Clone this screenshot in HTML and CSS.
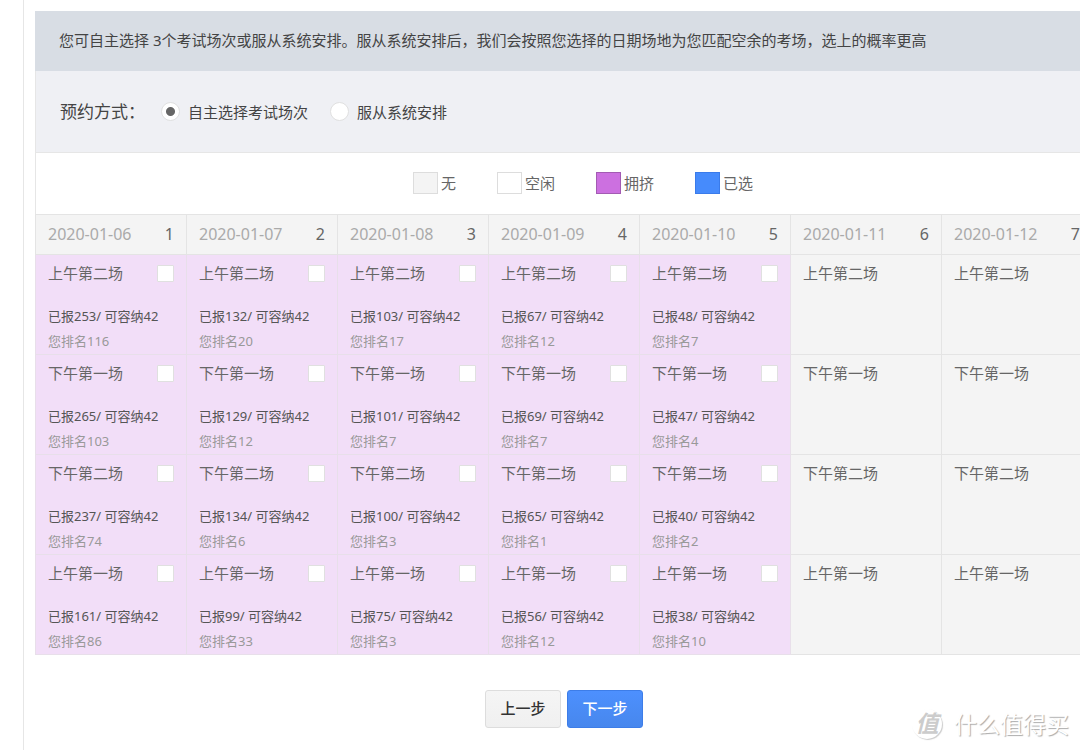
FILE: index.html
```html
<!DOCTYPE html>
<html lang="zh-CN">
<head>
<meta charset="utf-8">
<title>考试预约</title>
<link rel="stylesheet" href="styles.css">
</head>
<body>
<main class="page">
  <form class="panel">
    <p class="notice">您可自主选择 3个考试场次或服从系统安排。服从系统安排后，我们会按照您选择的日期场地为您匹配空余的考场，选上的概率更高</p>
    <div class="mode" role="radiogroup" aria-labelledby="mode-title">
      <span class="mode-title" id="mode-title">预约方式：</span>
      <label class="option"><input class="radio" type="radio" name="mode" checked>自主选择考试场次</label>
      <label class="option"><input class="radio" type="radio" name="mode">服从系统安排</label>
    </div>
    <div class="legend">
      <span class="legend-item"><i class="swatch none"></i>无</span>
      <span class="legend-item"><i class="swatch free"></i>空闲</span>
      <span class="legend-item"><i class="swatch busy"></i>拥挤</span>
      <span class="legend-item"><i class="swatch chosen"></i>已选</span>
    </div>
    <table class="schedule">
      <thead>
        <tr>
          <th><div class="day"><span>2020-01-06</span><b>1</b></div></th>
          <th><div class="day"><span>2020-01-07</span><b>2</b></div></th>
          <th><div class="day"><span>2020-01-08</span><b>3</b></div></th>
          <th><div class="day"><span>2020-01-09</span><b>4</b></div></th>
          <th><div class="day"><span>2020-01-10</span><b>5</b></div></th>
          <th><div class="day"><span>2020-01-11</span><b>6</b></div></th>
          <th><div class="day"><span>2020-01-12</span><b>7</b></div></th>
        </tr>
      </thead>
      <tbody>
        <tr>
          <td class="crowded"><label class="slot">上午第二场<input class="check" type="checkbox"></label><p class="count">已报253/ 可容纳42</p><p class="rank">您排名116</p></td>
          <td class="crowded"><label class="slot">上午第二场<input class="check" type="checkbox"></label><p class="count">已报132/ 可容纳42</p><p class="rank">您排名20</p></td>
          <td class="crowded"><label class="slot">上午第二场<input class="check" type="checkbox"></label><p class="count">已报103/ 可容纳42</p><p class="rank">您排名17</p></td>
          <td class="crowded"><label class="slot">上午第二场<input class="check" type="checkbox"></label><p class="count">已报67/ 可容纳42</p><p class="rank">您排名12</p></td>
          <td class="crowded"><label class="slot">上午第二场<input class="check" type="checkbox"></label><p class="count">已报48/ 可容纳42</p><p class="rank">您排名7</p></td>
          <td><span class="slot">上午第二场</span></td>
          <td><span class="slot">上午第二场</span></td>
        </tr>
        <tr>
          <td class="crowded"><label class="slot">下午第一场<input class="check" type="checkbox"></label><p class="count">已报265/ 可容纳42</p><p class="rank">您排名103</p></td>
          <td class="crowded"><label class="slot">下午第一场<input class="check" type="checkbox"></label><p class="count">已报129/ 可容纳42</p><p class="rank">您排名12</p></td>
          <td class="crowded"><label class="slot">下午第一场<input class="check" type="checkbox"></label><p class="count">已报101/ 可容纳42</p><p class="rank">您排名7</p></td>
          <td class="crowded"><label class="slot">下午第一场<input class="check" type="checkbox"></label><p class="count">已报69/ 可容纳42</p><p class="rank">您排名7</p></td>
          <td class="crowded"><label class="slot">下午第一场<input class="check" type="checkbox"></label><p class="count">已报47/ 可容纳42</p><p class="rank">您排名4</p></td>
          <td><span class="slot">下午第一场</span></td>
          <td><span class="slot">下午第一场</span></td>
        </tr>
        <tr>
          <td class="crowded"><label class="slot">下午第二场<input class="check" type="checkbox"></label><p class="count">已报237/ 可容纳42</p><p class="rank">您排名74</p></td>
          <td class="crowded"><label class="slot">下午第二场<input class="check" type="checkbox"></label><p class="count">已报134/ 可容纳42</p><p class="rank">您排名6</p></td>
          <td class="crowded"><label class="slot">下午第二场<input class="check" type="checkbox"></label><p class="count">已报100/ 可容纳42</p><p class="rank">您排名3</p></td>
          <td class="crowded"><label class="slot">下午第二场<input class="check" type="checkbox"></label><p class="count">已报65/ 可容纳42</p><p class="rank">您排名1</p></td>
          <td class="crowded"><label class="slot">下午第二场<input class="check" type="checkbox"></label><p class="count">已报40/ 可容纳42</p><p class="rank">您排名2</p></td>
          <td><span class="slot">下午第二场</span></td>
          <td><span class="slot">下午第二场</span></td>
        </tr>
        <tr>
          <td class="crowded"><label class="slot">上午第一场<input class="check" type="checkbox"></label><p class="count">已报161/ 可容纳42</p><p class="rank">您排名86</p></td>
          <td class="crowded"><label class="slot">上午第一场<input class="check" type="checkbox"></label><p class="count">已报99/ 可容纳42</p><p class="rank">您排名33</p></td>
          <td class="crowded"><label class="slot">上午第一场<input class="check" type="checkbox"></label><p class="count">已报75/ 可容纳42</p><p class="rank">您排名3</p></td>
          <td class="crowded"><label class="slot">上午第一场<input class="check" type="checkbox"></label><p class="count">已报56/ 可容纳42</p><p class="rank">您排名12</p></td>
          <td class="crowded"><label class="slot">上午第一场<input class="check" type="checkbox"></label><p class="count">已报38/ 可容纳42</p><p class="rank">您排名10</p></td>
          <td><span class="slot">上午第一场</span></td>
          <td><span class="slot">上午第一场</span></td>
        </tr>
      </tbody>
    </table>
    <div class="actions">
      <button class="btn" type="button">上一步</button>
      <button class="btn primary" type="button">下一步</button>
    </div>
  </form>
</main>
<div class="watermark"><span class="seal">值</span><span>什么值得买</span></div>
</body>
</html>
```
FILE: styles.css
```css
* { box-sizing: border-box; }

body {
  margin: 0;
  overflow: hidden;
  background: #fff;
  color: #444;
  font: 15px/20px "Noto Sans", "Noto Sans CJK SC", sans-serif;
}

p { margin: 0; }

.page {
  min-height: 100vh;
  margin-left: 23px;
  padding: 11px 0 0 11px;
  border-left: 1px solid #e6e6e6;
}

/* the seventh day runs slightly past the window's right edge */
.panel { margin-right: -13px; }

.notice {
  padding: 19px 24px 21px;
  background: #d8dde4;
  white-space: nowrap;
}

.mode {
  display: flex;
  align-items: center;
  height: 82px;
  padding-left: 24px;
  background: #eff0f4;
  border: 1px solid #e6e6e6;
  border-top: 0;
}

.mode-title { font-size: 17px; margin-right: 16px; }

.option {
  display: flex;
  align-items: center;
  gap: 8px;
  margin-right: 22px;
}

.radio {
  appearance: none;
  width: 19px;
  height: 19px;
  margin: 0;
  border: 1px solid #e0e0e0;
  border-radius: 50%;
  background: #fff;
}

.radio:checked { background: radial-gradient(circle, #666 4px, #fff 5px); }

.legend {
  display: flex;
  justify-content: center;
  align-items: center;
  gap: 41px;
  height: 61px;
  padding: 0 0 2px 37px;
  border-left: 1px solid #e6e6e6;
  color: #666;
}

.legend-item { display: flex; align-items: center; gap: 3px; }

.swatch {
  width: 25px;
  height: 22px;
  border: 1px solid #ddd;
}

.none { background: #f4f4f4; }
.free { background: #fff; }
.busy { background: #cc70e0; border-color: #a35bb3; }
.chosen { background: #468bfc; border-color: #3a7bea; }

.schedule {
  width: 100%;
  table-layout: fixed;
  border-collapse: collapse;
  background: #f4f4f4;
}

.schedule th,
.schedule td {
  padding: 0 12px;
  border: 1px solid #e4e4e4;
  font-weight: 400;
  text-align: left;
  vertical-align: top;
}

.schedule td { padding-top: 8px; color: #666; }

.schedule .crowded { background: #f2def8; border-color: #e8dfea; }

.day {
  display: flex;
  justify-content: space-between;
  font-size: 16px;
  line-height: 39px;
  color: #aaa;
}

.day b { font-weight: 400; color: #666; }

.slot {
  display: flex;
  justify-content: space-between;
  align-items: center;
}

.check {
  appearance: none;
  width: 17px;
  height: 17px;
  margin: 0;
  border: 1px solid #e0e0e0;
  border-radius: 1px;
  background: #fff;
}

.check:checked { background: #468bfc; }

.count,
.rank {
  font-size: 13px;
  line-height: 25px;
  white-space: nowrap;
}

.count { margin-top: 21px; color: #555; }
.rank { color: #999; }

.actions {
  display: flex;
  justify-content: center;
  gap: 6px;
  padding-top: 35px;
}

.btn {
  width: 76px;
  height: 38px;
  padding: 0 0 2px;
  border: 1px solid #ddd;
  border-radius: 3px;
  background: linear-gradient(#f5f5f5, #f0f0f0);
  color: #333;
  font: inherit;
  font-weight: 500;
}

.primary {
  border-color: #3d7de8;
  background: linear-gradient(#4d90fe, #4787ed);
  color: #fff;
}

.watermark {
  position: absolute;
  right: 11px;
  bottom: 10px;
  display: flex;
  align-items: center;
  gap: 10px;
  color: #fff;
  font-size: 23px;
  line-height: 32px;
  text-shadow: 1px 1px 1px #aaa;
}

.seal {
  width: 30px;
  height: 30px;
  margin-right: 2px;
  border-radius: 50%;
  box-shadow: 1px 1px 1px #ccc;
  color: #ccc;
  font-style: italic;
  font-weight: 700;
  line-height: 28px;
  text-align: center;
  text-shadow: none;
}
```
